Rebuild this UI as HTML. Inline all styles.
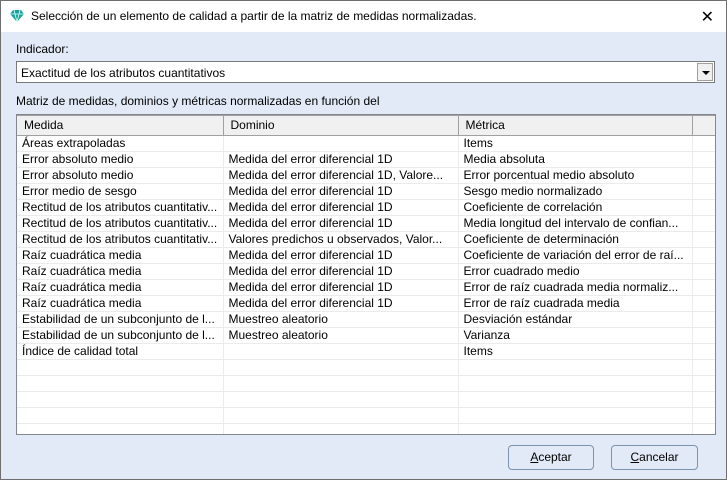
<!DOCTYPE html>
<html><head><meta charset="utf-8"><style>
*{margin:0;padding:0;box-sizing:border-box}
body{width:727px;height:480px;overflow:hidden;font-family:"Liberation Sans",sans-serif;font-size:12px;color:#000;background:#fff}
.win{position:absolute;left:0;top:0;width:727px;height:480px;border:1px solid #6f6f6f;background:#e1eaf6}
.title{position:absolute;left:0;top:0;width:725px;height:31px;background:#fff}
.title span{position:absolute;left:30px;top:8px;font-size:12px}
.x{position:absolute;right:12px;top:6px;font-size:16px}
.lbl{position:absolute;font-size:12px}
.combo{position:absolute;left:15px;top:60px;width:699px;height:22px;border:1px solid #7a7a7a;background:#fff}
.combo span{position:absolute;left:4px;top:4px}
.dd{position:absolute;right:1px;top:1px;width:16px;height:18px;background:#f0f0f0;border:1px solid #a0a0a0}
.dd:after{content:"";position:absolute;left:4px;top:7px;border-left:4px solid transparent;border-right:4px solid transparent;border-top:4px solid #000}
.grid{position:absolute;left:15px;top:113px;width:700px;height:321px;border:1px solid #828790;background:#fff;overflow:hidden}
table{border-collapse:collapse;table-layout:fixed;width:698px}
td,th{height:16px;padding:0 5px;white-space:nowrap;overflow:hidden;font-weight:normal;text-align:left;border-right:1px solid #ebebeb;border-bottom:1px solid #ebebeb;font-size:12px;line-height:15px}
th{height:20px;background:#f0f0f0;border:1px solid #a0a0a0;border-left:none;padding-left:7px}
.btn{position:absolute;top:444px;height:25px;border:1px solid #7c93b0;border-radius:4px;background:#e1eaf6;text-align:center;line-height:23px}
</style></head><body><div class="win">
<div class="title"><svg style="position:absolute;left:9px;top:9px" width="14" height="12" viewBox="0 0 14 12"><path d="M3 0H11L14 4L7 12L0 4Z" fill="#1aa39a"/><path d="M0 4H14M4 0L5 4L7 12L9 4L10 0" stroke="#dff" stroke-width="0.8" fill="none"/></svg><span>Selección de un elemento de calidad a partir de la matriz de medidas normalizadas.</span><div class="x">✕</div></div>
<div class="lbl" style="left:15px;top:41px">Indicador:</div>
<div class="combo"><span>Exactitud de los atributos cuantitativos</span><div class="dd"></div></div>
<div class="lbl" style="left:15px;top:93px">Matriz de medidas, dominios y métricas normalizadas en función del</div>
<div class="grid"><table>
<colgroup><col style="width:206px"><col style="width:235px"><col style="width:234px"><col style="width:23px"></colgroup>
<tr><th>Medida</th><th>Dominio</th><th>Métrica</th><th></th></tr>
<tr><td>Áreas extrapoladas</td><td></td><td>Items</td><td></td></tr>
<tr><td>Error absoluto medio</td><td>Medida del error diferencial 1D</td><td>Media absoluta</td><td></td></tr>
<tr><td>Error absoluto medio</td><td>Medida del error diferencial 1D, Valore...</td><td>Error porcentual medio absoluto</td><td></td></tr>
<tr><td>Error medio de sesgo</td><td>Medida del error diferencial 1D</td><td>Sesgo medio normalizado</td><td></td></tr>
<tr><td>Rectitud de los atributos cuantitativ...</td><td>Medida del error diferencial 1D</td><td>Coeficiente de correlación</td><td></td></tr>
<tr><td>Rectitud de los atributos cuantitativ...</td><td>Medida del error diferencial 1D</td><td>Media longitud del intervalo de confian...</td><td></td></tr>
<tr><td>Rectitud de los atributos cuantitativ...</td><td>Valores predichos u observados, Valor...</td><td>Coeficiente de determinación</td><td></td></tr>
<tr><td>Raíz cuadrática media</td><td>Medida del error diferencial 1D</td><td>Coeficiente de variación del error de raí...</td><td></td></tr>
<tr><td>Raíz cuadrática media</td><td>Medida del error diferencial 1D</td><td>Error cuadrado medio</td><td></td></tr>
<tr><td>Raíz cuadrática media</td><td>Medida del error diferencial 1D</td><td>Error de raíz cuadrada media normaliz...</td><td></td></tr>
<tr><td>Raíz cuadrática media</td><td>Medida del error diferencial 1D</td><td>Error de raíz cuadrada media</td><td></td></tr>
<tr><td>Estabilidad de un subconjunto de l...</td><td>Muestreo aleatorio</td><td>Desviación estándar</td><td></td></tr>
<tr><td>Estabilidad de un subconjunto de l...</td><td>Muestreo aleatorio</td><td>Varianza</td><td></td></tr>
<tr><td>Índice de calidad total</td><td></td><td>Items</td><td></td></tr>
<tr><td></td><td></td><td></td><td></td></tr>
<tr><td></td><td></td><td></td><td></td></tr>
<tr><td></td><td></td><td></td><td></td></tr>
<tr><td></td><td></td><td></td><td></td></tr>
<tr><td></td><td></td><td></td><td></td></tr>
</table></div>
<div class="btn" style="left:507px;width:86px"><u>A</u>ceptar</div>
<div class="btn" style="left:610px;width:87px"><u>C</u>ancelar</div>
</div></body></html>
